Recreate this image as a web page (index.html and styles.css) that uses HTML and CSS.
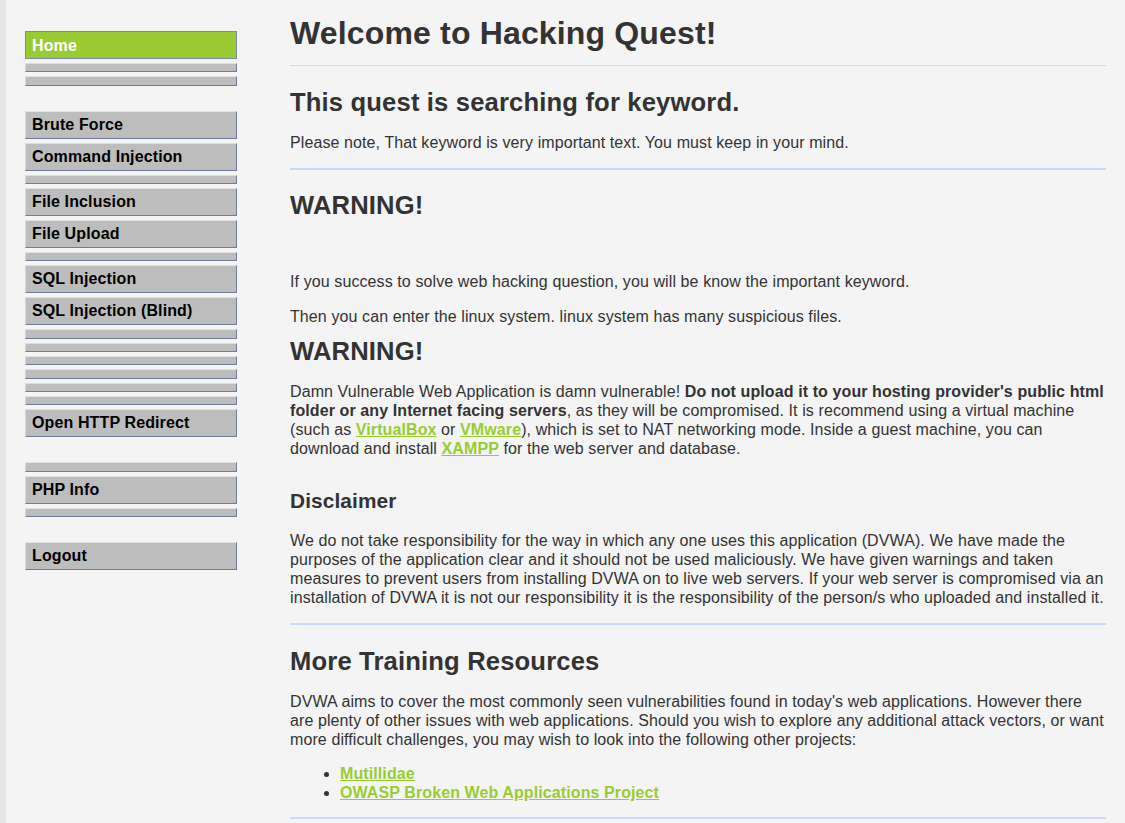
FILE: index.html
```html
<!DOCTYPE html>
<html lang="en">
<head>
<meta charset="utf-8">
<title>Welcome to Hacking Quest!</title>
<link rel="stylesheet" href="styles.css">
</head>
<body>
<div class="page">
  <nav class="menu">
    <ul class="menu-group">
      <li><a class="item selected" href="#">Home</a></li>
      <li><a class="item empty" href="#"></a></li>
      <li><a class="item empty" href="#"></a></li>
    </ul>
    <ul class="menu-group">
      <li><a class="item" href="#">Brute Force</a></li>
      <li><a class="item" href="#">Command Injection</a></li>
      <li><a class="item empty" href="#"></a></li>
      <li><a class="item" href="#">File Inclusion</a></li>
      <li><a class="item" href="#">File Upload</a></li>
      <li><a class="item empty" href="#"></a></li>
      <li><a class="item" href="#">SQL Injection</a></li>
      <li><a class="item" href="#">SQL Injection (Blind)</a></li>
      <li><a class="item empty" href="#"></a></li>
      <li><a class="item empty" href="#"></a></li>
      <li><a class="item empty" href="#"></a></li>
      <li><a class="item empty" href="#"></a></li>
      <li><a class="item empty" href="#"></a></li>
      <li><a class="item empty" href="#"></a></li>
      <li><a class="item" href="#">Open HTTP Redirect</a></li>
    </ul>
    <ul class="menu-group">
      <li><a class="item empty" href="#"></a></li>
      <li><a class="item" href="#">PHP Info</a></li>
      <li><a class="item empty" href="#"></a></li>
    </ul>
    <ul class="menu-group">
      <li><a class="item" href="#">Logout</a></li>
    </ul>
  </nav>

  <main class="content">
    <h1 class="title">Welcome to Hacking Quest!</h1>
    <h2 class="heading first">This quest is searching for keyword.</h2>
    <p class="text">Please note, That keyword is very important text. You must keep in your mind.</p>
    <hr class="rule">
    <h2 class="heading warn-1">WARNING!</h2>
    <p class="text gap-big">If you success to solve web hacking question, you will be know the important keyword.</p>
    <p class="text">Then you can enter the linux system. linux system has many suspicious files.</p>
    <h2 class="heading warn-2">WARNING!</h2>
    <p class="text">Damn Vulnerable Web Application is damn vulnerable! <strong>Do not upload it to your hosting provider's public html folder or any Internet facing servers</strong>, as they will be compromised. It is recommend using a virtual machine (such as <a class="link" href="#">VirtualBox</a> or <a class="link" href="#">VMware</a>), which is set to NAT networking mode. Inside a guest machine, you can download and install <a class="link" href="#">XAMPP</a> for the web server and database.</p>
    <h3 class="subheading">Disclaimer</h3>
    <p class="text">We do not take responsibility for the way in which any one uses this application (DVWA). We have made the purposes of the application clear and it should not be used maliciously. We have given warnings and taken measures to prevent users from installing DVWA on to live web servers. If your web server is compromised via an installation of DVWA it is not our responsibility it is the responsibility of the person/s who uploaded and installed it.</p>
    <hr class="rule">
    <h2 class="heading warn-3">More Training Resources</h2>
    <p class="text">DVWA aims to cover the most commonly seen vulnerabilities found in today's web applications. However there are plenty of other issues with web applications. Should you wish to explore any additional attack vectors, or want more difficult challenges, you may wish to look into the following other projects:</p>
    <ul class="resources">
      <li><a class="link" href="#">Mutillidae</a></li>
      <li><a class="link" href="#">OWASP Broken Web Applications Project</a></li>
    </ul>
    <hr class="rule last">
  </main>
</div>
</body>
</html>
```

FILE: styles.css
```css
html, body {
  margin: 0;
  padding: 0;
}

body {
  background: #e7e7e7;
  font-family: "Liberation Sans", Arial, sans-serif;
  font-size: 16px;
  color: #333333;
  letter-spacing: 0.1px;
}

.page {
  margin-left: 6px;
  background: #f4f4f4;
  min-height: 823px;
  display: flex;
  padding: 0 19px;
  overflow: hidden;
}

/* ---------- menu ---------- */
.menu {
  width: 212px;
  flex-shrink: 0;
  padding-top: 31px;
}

.menu-group {
  list-style: none;
  margin: 0 0 25px 0;
  padding: 0;
}

.menu-group li {
  margin: 0 0 4px 0;
}

.item {
  display: block;
  box-sizing: border-box;
  height: 28px;
  padding: 3px 6px 4px 6px;
  line-height: 19px;
  font-size: 16px;
  font-weight: bold;
  letter-spacing: 0.12px;
  color: #000000;
  text-decoration: none;
  background: #bdbdbd;
  border-top: 1px solid #e0e0e0;
  border-left: 1px solid #d6d6d6;
  border-right: 1px solid #6f7d9a;
  border-bottom: 1px solid #6f7d9a;
}

.item.empty {
  height: 9.34px;
  padding: 0;
}

.item.selected {
  padding: 4px 6px 3px 6px;
  background: #99cc33;
  color: #ffffff;
  border: 1px solid #7a8aab;
}

/* ---------- content ---------- */
.content {
  flex: 1;
  margin-left: 53px;
  min-width: 0;
}

.title {
  margin: 15px 0 0 0;
  padding-bottom: 13px;
  font-size: 32px;
  line-height: 37px;
  font-weight: bold;
  letter-spacing: 0.16px;
  color: #333333;
  border-bottom: 1px solid #c6daff;
}

.heading {
  margin: 0;
  font-size: 25.6px;
  line-height: 30px;
  font-weight: bold;
  letter-spacing: 0.16px;
  color: #333333;
}

.heading.first {
  margin-top: 21px;
}

.heading.warn-1 {
  margin-top: 20px;
}

.heading.warn-2 {
  margin-top: 10px;
}

.heading.warn-3 {
  margin-top: 21px;
}

.subheading {
  margin: 31px 0 0 0;
  font-size: 20.8px;
  line-height: 24px;
  font-weight: bold;
  letter-spacing: 0.12px;
  color: #333333;
}

.text {
  margin: 16px 0 0 0;
  line-height: 19px;
}

.text.gap-big {
  margin-top: 52px;
}

.subheading + .text {
  margin-top: 18px;
}

.text strong {
  font-weight: bold;
}

.rule {
  margin: 16px 0 0 0;
  border: 0;
  height: 2px;
  background: #c6daff;
}

.rule.last {
  margin-top: 15px;
}

.link {
  color: #99cc33;
  font-weight: bold;
  text-decoration: underline;
}

.resources {
  margin: 15px 0 0 0;
  padding-left: 50px;
  line-height: 19px;
}
```
